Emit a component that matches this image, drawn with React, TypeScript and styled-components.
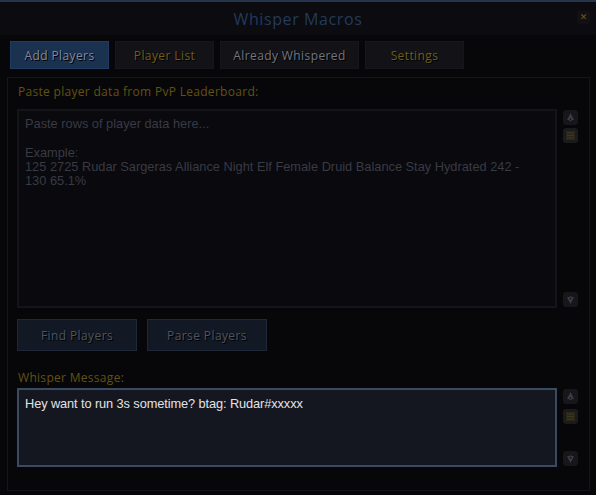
import React, { useState } from 'react';
import styled, { createGlobalStyle } from 'styled-components';

const GlobalStyle = createGlobalStyle`
  html, body {
    margin: 0;
    padding: 0;
    background: #07070b;
  }
  * {
    box-sizing: border-box;
  }
`;

const Window = styled.div`
  width: 596px;
  height: 495px;
  display: flex;
  flex-direction: column;
  background: #07070a;
  border-top: 2px solid #25354d;
  overflow: hidden;
`;

const TitleBar = styled.div`
  height: 33px;
  display: grid;
  grid-template-columns: 24px 1fr 24px;
  align-items: center;
  padding: 0 6px;
  background: #0b0b10;
`;

const Title = styled.h1`
  grid-column: 2;
  margin: 0;
  text-align: center;
  font-family: 'Open Sans', 'DejaVu Sans', sans-serif;
  font-weight: 400;
  font-size: 16px;
  letter-spacing: 0.6px;
  color: #233a5c;
`;

const CloseButton = styled.button`
  justify-self: end;
  width: 13px;
  height: 13px;
  padding: 0;
  margin-top: -2px;
  border: none;
  border-radius: 2px;
  background: #111113;
  color: #6e5e16;
  font-family: 'DejaVu Sans', sans-serif;
  font-size: 9px;
  line-height: 13px;
  cursor: pointer;
`;

const TabRow = styled.div`
  display: flex;
  gap: 6px;
  padding: 6px 10px 0;
`;

const Tab = styled.button<{ $active?: boolean; $tone: 'gold' | 'gray' | 'blue'; $w: number }>`
  width: ${p => p.$w}px;
  height: 28px;
  padding: 0;
  border: 1px solid ${p => (p.$active ? '#213c61' : '#16161c')};
  background: ${p => (p.$active ? '#1b3150' : '#121217')};
  color: ${p => (p.$tone === 'gold' ? '#6f5e18' : p.$tone === 'blue' ? '#7e8b9e' : '#71767f')};
  font-family: 'Open Sans', 'DejaVu Sans', sans-serif;
  font-size: 12px;
  letter-spacing: 0.4px;
  text-shadow: 1px 1px 0 #000;
  cursor: pointer;
`;

const Panel = styled.div`
  flex: 1;
  margin: 8px 6px 4px 7px;
  border: 1px solid #15151c;
  padding: 6px 10px 22px 9px;
  display: flex;
  flex-direction: column;
`;

const Label = styled.div`
  font-family: 'Open Sans', 'DejaVu Sans', sans-serif;
  font-size: 12px;
  line-height: 16px;
  letter-spacing: 0.3px;
  color: #625211;
  padding-left: 1px;
`;

const EditorRow = styled.div<{ $h: number; $top: number }>`
  display: grid;
  grid-template-columns: 540px 16px;
  gap: 6px;
  height: ${p => p.$h}px;
  margin-top: ${p => p.$top}px;
`;

const TextArea = styled.textarea<{ $focused?: boolean }>`
  width: 100%;
  height: 100%;
  resize: none;
  margin: 0;
  padding: 6px 24px 6px 6px;
  border: 2px solid ${p => (p.$focused ? '#3a4a62' : '#14141b')};
  background: ${p => (p.$focused ? '#151720' : '#09090e')};
  color: #e2e2e4;
  font-family: 'Liberation Sans', Arial, sans-serif;
  font-size: 12.8px;
  line-height: ${p => (p.$focused ? '15px' : '14.3px')};
  letter-spacing: ${p => (p.$focused ? '-0.1px' : '0')};
  outline: none;

  &::placeholder {
    color: #3a3a44;
  }
`;

const ScrollCol = styled.div<{ $pad: number }>`
  display: flex;
  flex-direction: column;
  justify-content: space-between;
  padding: ${p => p.$pad}px 0 1px;
`;

const ScrollGroup = styled.div<{ $gap: number }>`
  display: flex;
  flex-direction: column;
  gap: ${p => p.$gap}px;
`;

const ScrollBtn = styled.div<{ $gold?: boolean }>`
  width: 15px;
  height: 15px;
  border-radius: 3px;
  background: ${p => (p.$gold ? '#1b1a1c' : '#16161b')};
  display: flex;
  align-items: center;
  justify-content: center;
`;

const ButtonRow = styled.div`
  display: flex;
  gap: 10px;
  margin: 11px 0 19px;
`;

const ActionButton = styled.button`
  width: 120px;
  height: 32px;
  padding: 0;
  border: 1px solid #1e2838;
  background: #121824;
  color: #4f545e;
  font-family: 'Open Sans', 'DejaVu Sans', sans-serif;
  font-size: 12px;
  letter-spacing: 0.4px;
  text-shadow: 1px 1px 0 #000;
  cursor: pointer;
`;

const UpIcon = () => (
  <svg width="11" height="11" viewBox="0 0 11 11">
    <path d="M5.5 1 L9 8 L2 8 Z" fill="#3a3a44" />
    <circle cx="5.5" cy="7" r="1.6" fill="#1a1a20" stroke="#4a4a55" strokeWidth="0.8" />
  </svg>
);

const DownIcon = () => (
  <svg width="11" height="11" viewBox="0 0 11 11">
    <path d="M2 3 L9 3 L5.5 10 Z" fill="#3a3a44" />
    <circle cx="5.5" cy="4.5" r="1.6" fill="#1a1a20" stroke="#4a4a55" strokeWidth="0.8" />
  </svg>
);

const GripIcon = () => (
  <svg width="11" height="11" viewBox="0 0 11 11">
    <rect x="1" y="1" width="9" height="9" fill="#2a2619" />
    <path d="M2 3 H9 M2 5.5 H9 M2 8 H9" stroke="#3f3820" strokeWidth="1" />
  </svg>
);

interface ScrollbarProps {
  pad: number;
  gap: number;
}

function Scrollbar({ pad, gap }: ScrollbarProps) {
  return (
    <ScrollCol $pad={pad}>
      <ScrollGroup $gap={gap}>
        <ScrollBtn><UpIcon /></ScrollBtn>
        <ScrollBtn $gold><GripIcon /></ScrollBtn>
      </ScrollGroup>
      <ScrollBtn><DownIcon /></ScrollBtn>
    </ScrollCol>
  );
}

const tabs = [
  { label: 'Add Players', tone: 'blue' as const, w: 99 },
  { label: 'Player List', tone: 'gold' as const, w: 99 },
  { label: 'Already Whispered', tone: 'gray' as const, w: 139 },
  { label: 'Settings', tone: 'gold' as const, w: 99 },
];

export default function App() {
  const [active, setActive] = useState(0);
  const [data, setData] = useState('');
  const [message, setMessage] = useState('Hey want to run 3s sometime? btag: Rudar#xxxxx');

  return (
    <>
      <GlobalStyle />
      <Window>
        <TitleBar>
          <Title>Whisper Macros</Title>
          <CloseButton>✕</CloseButton>
        </TitleBar>
        <TabRow>
          {tabs.map((t, i) => (
            <Tab key={t.label} $active={i === active} $tone={t.tone} $w={t.w} onClick={() => setActive(i)}>
              {t.label}
            </Tab>
          ))}
        </TabRow>
        <Panel>
          <Label>Paste player data from PvP Leaderboard:</Label>
          <EditorRow $h={199} $top={9}>
            <TextArea
              value={data}
              onChange={e => setData(e.target.value)}
              placeholder={'Paste rows of player data here...\n\nExample:\n125 2725 Rudar Sargeras Alliance Night Elf Female Druid Balance Stay Hydrated 242 - 130 65.1%'}
            />
            <Scrollbar pad={1} gap={3} />
          </EditorRow>
          <ButtonRow>
            <ActionButton>Find Players</ActionButton>
            <ActionButton>Parse Players</ActionButton>
          </ButtonRow>
          <Label>Whisper Message:</Label>
          <EditorRow $h={79} $top={2}>
            <TextArea $focused value={message} onChange={e => setMessage(e.target.value)} />
            <Scrollbar pad={1} gap={5} />
          </EditorRow>
        </Panel>
      </Window>
    </>
  );
}
